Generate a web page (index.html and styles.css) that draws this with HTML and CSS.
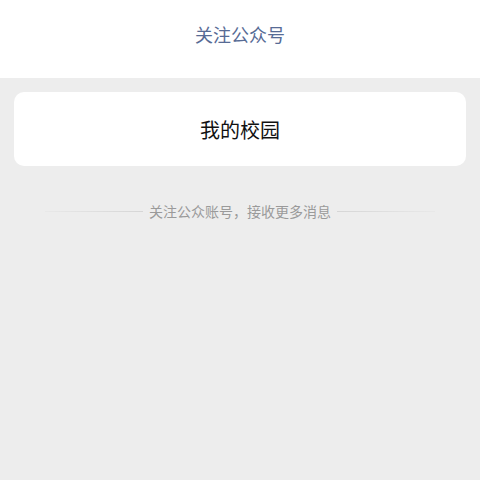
FILE: index.html
```html
<!DOCTYPE html>
<html lang="zh-CN">
<head>
    <meta charset="UTF-8">
    <meta name="viewport" content="width=device-width, initial-scale=1.0">
    <title>关注公众号</title>
    <link rel="stylesheet" href="styles.css">
</head>
<body>
    <header class="top-bar">关注公众号</header>
    <main class="content">
        <div class="account-card">我的校园</div>
        <div class="divider">
            <span class="divider-line left"></span>
            <span class="divider-text">关注公众账号，接收更多消息</span>
            <span class="divider-line right"></span>
        </div>
    </main>
</body>
</html>
```

FILE: styles.css
```css
html, body {
    margin: 0;
    height: 100%;
}
body {
    font-family: 'Noto Sans CJK SC', 'Noto Sans', sans-serif;
    background: #ededed;
}
.top-bar {
    height: 78px;
    background: #fff;
    color: #576b95;
    font-size: 18px;
    display: flex;
    align-items: center;
    justify-content: center;
    padding-bottom: 10px;
    box-sizing: border-box;
}
.content {
    padding: 14px 14px 0;
}
.account-card {
    height: 74px;
    background: #fff;
    border-radius: 10px;
    display: flex;
    align-items: center;
    justify-content: center;
    font-size: 20px;
    color: #111;
}
.divider {
    display: flex;
    align-items: center;
    justify-content: center;
    gap: 6px;
    margin-top: 35px;
}
.divider-text {
    font-size: 14px;
    color: #9a9a9a;
}
.divider-line {
    width: 98px;
    height: 1px;
}
.divider-line.left {
    background: linear-gradient(to right, rgba(214, 214, 214, 0.2), #d6d6d6);
}
.divider-line.right {
    background: linear-gradient(to left, rgba(214, 214, 214, 0.2), #d6d6d6);
}
```
